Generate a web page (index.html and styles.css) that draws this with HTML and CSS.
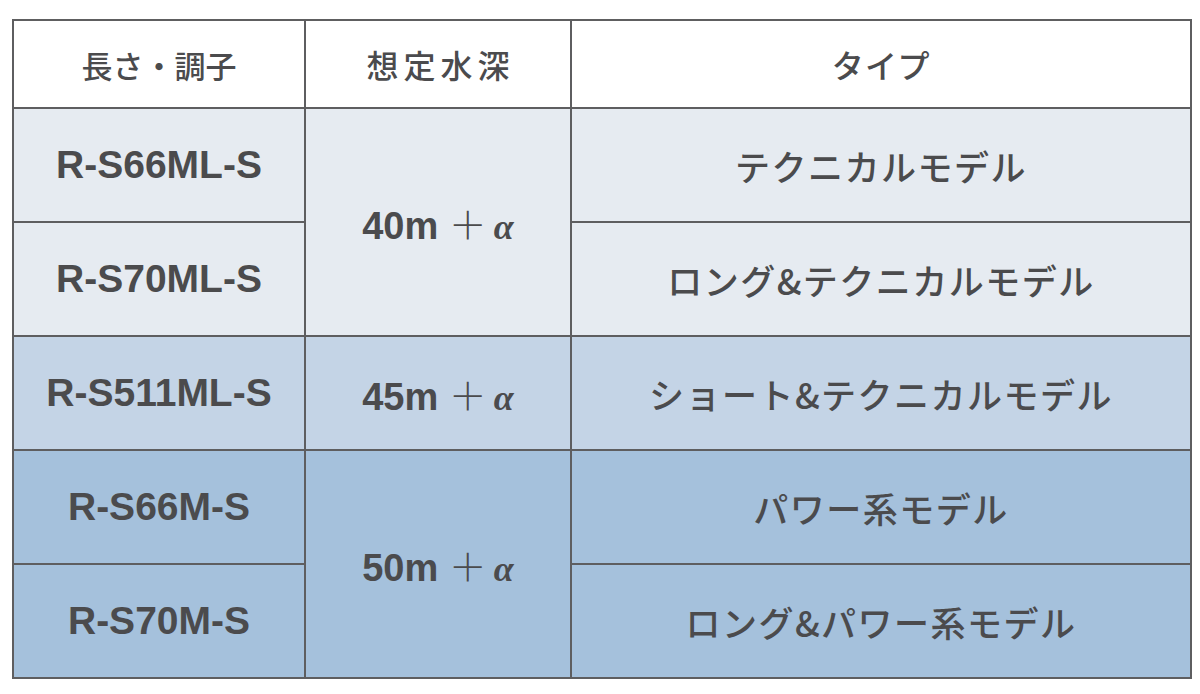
FILE: index.html
```html
<!DOCTYPE html>
<html lang="ja">
<head>
<meta charset="utf-8">
<title>モデル一覧</title>
<link rel="stylesheet" href="styles.css">
</head>
<body>
<table class="spec">
  <colgroup>
    <col class="c1">
    <col class="c2">
    <col class="c3">
  </colgroup>
  <thead>
    <tr class="head">
      <th class="tight">長さ・調子</th>
      <th>想定水深</th>
      <th>タイプ</th>
    </tr>
  </thead>
  <tbody>
    <tr class="tier1">
      <td class="model">R-S66ML-S</td>
      <td class="depth" rowspan="2">40m <span class="plus">＋</span><span class="alpha">α</span></td>
      <td class="type">テクニカルモデル</td>
    </tr>
    <tr class="tier1">
      <td class="model">R-S70ML-S</td>
      <td class="type">ロング&amp;テクニカルモデル</td>
    </tr>
    <tr class="tier2">
      <td class="model">R-S511ML-S</td>
      <td class="depth">45m <span class="plus">＋</span><span class="alpha">α</span></td>
      <td class="type">ショート&amp;テクニカルモデル</td>
    </tr>
    <tr class="tier3">
      <td class="model">R-S66M-S</td>
      <td class="depth" rowspan="2">50m <span class="plus">＋</span><span class="alpha">α</span></td>
      <td class="type">パワー系モデル</td>
    </tr>
    <tr class="tier3">
      <td class="model">R-S70M-S</td>
      <td class="type">ロング&amp;パワー系モデル</td>
    </tr>
  </tbody>
</table>
</body>
</html>
```
FILE: styles.css
```css
html, body {
  margin: 0;
  padding: 0;
  background: #ffffff;
}
body {
  padding: 19px 0 0 12px;
  font-family: "Liberation Sans", "Noto Sans CJK JP", sans-serif;
  color: #4b4b4d;
}
.spec {
  border-collapse: collapse;
  width: 1178px;
  table-layout: fixed;
  border: 2px solid #5e5e60;
}
.c1 { width: 292px; }
.c2 { width: 266px; }
.c3 { width: 620px; }
.spec th,
.spec td {
  border: 2px solid #5e5e60;
  text-align: center;
  vertical-align: middle;
  padding: 0;
}
.head th {
  height: 86px;
  background: #ffffff;
  font-family: "Noto Sans CJK JP", sans-serif;
  font-weight: 500;
  font-size: 32px;
  font-feature-settings: "palt";
  letter-spacing: 5px;
  text-indent: 5px;
}
.head th.tight {
  font-size: 31px;
  font-feature-settings: normal;
  letter-spacing: 0;
  text-indent: 0;
}
.spec tbody td {
  height: 112px;
}
.model {
  font-weight: 700;
  font-size: 39px;
}
.depth {
  font-weight: 700;
  font-size: 38px;
}
.plus {
  font-family: "Noto Sans CJK JP", sans-serif;
  font-weight: 300;
  font-size: 38px;
  margin-right: 7px;
}
.alpha {
  font-family: "Liberation Serif", serif;
  font-style: italic;
  font-weight: 700;
  font-size: 36px;
}
.type {
  font-family: "Noto Sans CJK JP", sans-serif;
  font-weight: 500;
  font-size: 35px;
  letter-spacing: 1.5px;
}
.tier1 td { background: #e6ebf1; }
.tier2 td { background: #c4d4e6; }
.tier3 td { background: #a5c1dc; }
```
